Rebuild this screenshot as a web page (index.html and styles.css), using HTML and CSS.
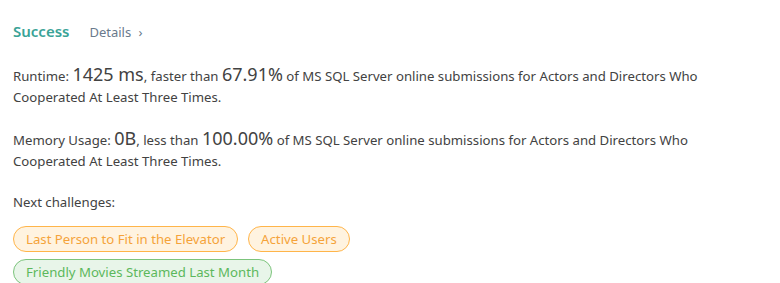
FILE: index.html
```html
<!DOCTYPE html>
<html>
<head>
<meta charset="utf-8">
<link rel="stylesheet" href="styles.css">
</head>
<body>
<div class="page">
  <div class="header">
    <span class="status">Success</span>
    <a class="details">Details <span class="chev">›</span></a>
  </div>
  <p class="stat first">Runtime: <span class="big">1425 ms</span>, faster than <span class="big">67.91%</span> of MS SQL Server online submissions for Actors and Directors Who Cooperated At Least Three Times.</p>
  <p class="stat">Memory Usage: <span class="big">0B</span>, less than <span class="big">100.00%</span> of MS SQL Server online submissions for Actors and Directors Who Cooperated At Least Three Times.</p>
  <p class="next">Next challenges:</p>
  <div class="pills">
    <span class="pill medium">Last Person to Fit in the Elevator</span>
    <span class="pill medium">Active Users</span>
    <span class="pill easy">Friendly Movies Streamed Last Month</span>
  </div>
</div>
</body>
</html>
```
FILE: styles.css
```css
html, body { margin: 0; padding: 0; background: #fff; }
body {
  font-family: "Noto Sans", "Open Sans", sans-serif;
  font-size: 13.2px;
  color: #424242;
}
.page { padding: 21px 13px 0 13px; width: 705px; }
.header { display: flex; align-items: baseline; gap: 20px; height: 24px; }
.status { color: #3aa397; font-weight: 600; font-size: 15px; }
.details { color: #6a7a8c; font-size: 13px; }
.chev { margin-left: 4px; }
.stat { margin: 21px 0 0 0; line-height: 21px; }
.stat.first { margin-top: 20px; }
.big { font-size: 18px; line-height: 1; }
.next { margin: 20px 0 0 0; line-height: 21px; }
.pills { display: flex; flex-wrap: wrap; gap: 7px 10px; margin-top: 13px; max-width: 400px; }
.pill {
  border-radius: 13px;
  padding: 0 12px;
  height: 24px;
  line-height: 24px;
  font-size: 13.2px;
  border: 1px solid;
}
.medium { color: #f5a33a; border-color: #ffb54a; background: #fff3e0; }
.easy { color: #5cb85c; border-color: #7cc47c; background: #e8f5e9; }
```
